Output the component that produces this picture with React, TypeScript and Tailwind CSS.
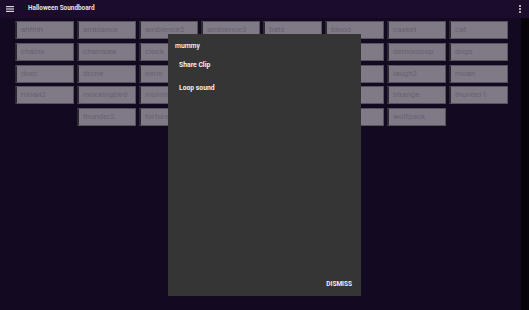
const sounds = [
    'ahhhh', 'ambiance', 'ambience2', 'ambience3', 'bats', 'blood', 'casket', 'cat',
    'chains', 'chainsaw', 'clock', 'creak', 'crow', 'death', 'demonloop', 'dogs',
    'door', 'drone', 'eerie', 'ghost', 'howl', 'laugh', 'laugh2', 'moan',
    'moan2', 'mockingbird', 'mummy', 'organ', 'scream', 'spooky', 'strange', 'thunder1',
    'thunder2', 'torture', 'vampire', 'werewolf', 'witch', 'wolfpack',
];

export default function App() {
    return (
        <div className="relative flex h-[310px] w-[529px] flex-col overflow-hidden bg-[#130a22] font-['Roboto',sans-serif]">
            {/* App bar */}
            <header className="flex h-[18px] shrink-0 items-center bg-[#1b0c2b] pl-[6px] pr-[8px]">
                <svg width="8" height="6" viewBox="0 0 8 6" className="mr-[14px]">
                    <rect x="0" y="0" width="8" height="1.2" fill="#d8d4dc" />
                    <rect x="0" y="2.4" width="8" height="1.2" fill="#d8d4dc" />
                    <rect x="0" y="4.8" width="8" height="1.2" fill="#d8d4dc" />
                </svg>
                <span className="text-[6.4px] font-bold text-[#e6e2ea]">Halloween Soundboard</span>
                <svg width="2" height="8" viewBox="0 0 2 8" className="ml-auto">
                    <circle cx="1" cy="1" r="1" fill="#e6e2ea" />
                    <circle cx="1" cy="4" r="1" fill="#e6e2ea" />
                    <circle cx="1" cy="7" r="1" fill="#e6e2ea" />
                </svg>
            </header>

            <div className="flex flex-1">
                {/* Sound buttons */}
                <div className="flex flex-1 flex-wrap content-start justify-center gap-x-[3px] gap-y-[3.75px] pl-[2px] pt-[3px]">
                    {sounds.map((name) => (
                        <button
                            key={name}
                            className="flex h-[18px] w-[59px] items-center border border-[#57525c] border-l-2 border-l-[#2c2832] bg-[#7f7a86] pl-[4px] text-left text-[8px] text-[#68626e]"
                        >
                            {name}
                        </button>
                    ))}
                </div>
                <div className="w-[8px] bg-[#060309]" />
            </div>

            {/* Dialog */}
            <div className="absolute left-[168px] top-[34px] flex h-[262px] w-[193px] flex-col bg-[#353535] text-[#f2f2f2]">
                <div className="pl-[7px] pt-[8px] text-[6.8px] font-semibold leading-[9px]">mummy</div>
                <div className="mt-[10px] pl-[11px] text-[6.8px] font-bold leading-[9px]">Share Clip</div>
                <div className="mt-[14px] pl-[11px] text-[6.8px] font-bold leading-[9px]">Loop sound</div>
                <div className="mt-auto flex justify-end pb-[7px] pr-[9px]">
                    <span className="text-[6.5px] font-bold leading-[9px]">DISMISS</span>
                </div>
            </div>
        </div>
    );
}
